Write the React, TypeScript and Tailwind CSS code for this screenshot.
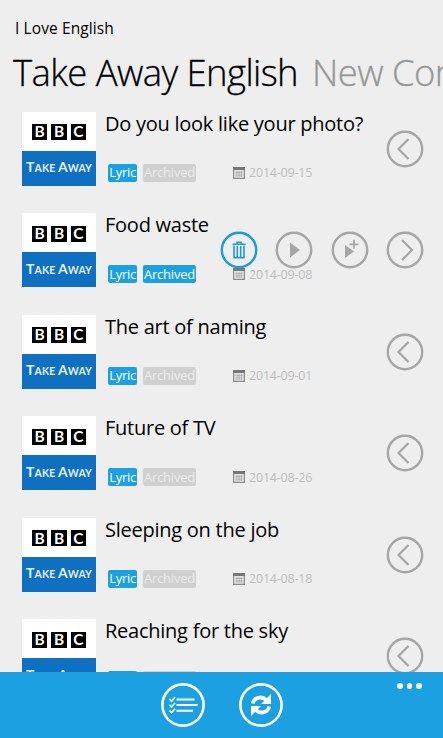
import type { ReactNode } from "react";
import clsx from "clsx";

type Episode = {
  title: string;
  date: string;
  archived?: boolean;
  expanded?: boolean;
};

const episodes: Episode[] = [
  { title: "Do you look like your photo?", date: "2014-09-15" },
  { title: "Food waste", date: "2014-09-08", archived: true, expanded: true },
  { title: "The art of naming", date: "2014-09-01" },
  { title: "Future of TV", date: "2014-08-26" },
  { title: "Sleeping on the job", date: "2014-08-18" },
  { title: "Reaching for the sky", date: "2014-08-11" },
];

function RoundIcon({ className, children }: { className?: string; children: ReactNode }) {
  return (
    <svg
      viewBox="0 0 38 38"
      className={clsx("size-[38px] shrink-0", className ?? "text-[#a6a6a6]")}
      fill="none"
      stroke="currentColor"
    >
      <circle cx="19" cy="19" r="17.2" strokeWidth="2.4" />
      {children}
    </svg>
  );
}

function Thumbnail() {
  return (
    <div className="flex h-[74px] w-[74px] shrink-0 flex-col bg-white">
      <div className="flex h-[39px] items-end justify-center gap-[4px] pb-[10.5px]">
        {["B", "B", "C"].map((letter, i) => (
          <span
            key={i}
            className="flex h-[16px] w-[15.5px] items-center justify-center bg-black font-['Lato'] text-[15.5px] leading-none font-bold text-white"
          >
            {letter}
          </span>
        ))}
      </div>
      <div className="flex h-[35px] items-center justify-center bg-[#0f6fc0] pb-[2px] font-['Lato'] text-[10.5px] leading-none font-bold tracking-[0.1px] whitespace-nowrap text-[#e4f0fa]">
        <span>
          <span className="text-[14px]">T</span>AKE <span className="text-[14px]">A</span>WAY
        </span>
      </div>
    </div>
  );
}

function CalendarIcon() {
  return (
    <svg viewBox="0 0 12 12" className="size-[12px]">
      <rect x="0.6" y="0.6" width="10.8" height="10.8" fill="#e2e2e2" stroke="#8c8c8c" strokeWidth="1.2" />
      <path d="M0 0h12v3H0z" fill="#777" />
      <path d="M4 4v6M6.2 4v6M8.4 4v6M2.5 5.5h7M2.5 8h7" stroke="#aaa" strokeWidth="0.8" />
    </svg>
  );
}

function Tag({ active, className, children }: { active?: boolean; className: string; children: ReactNode }) {
  return (
    <span
      className={clsx(
        "flex h-[18px] items-center justify-center rounded-[2px] text-[13px] leading-none whitespace-nowrap",
        active ? "bg-[#1ba1e2] text-white" : "bg-[#d0d0d0] text-[#ebebeb]",
        className,
      )}
    >
      {children}
    </span>
  );
}

function EpisodeRow({ title, date, archived, expanded }: Episode) {
  return (
    <li className="relative flex h-[101.6px] shrink-0 pl-[22px]">
      <Thumbnail />
      <div className="pl-[9px]">
        <h2 className="h-[52px] text-[20px] leading-[24px] tracking-[-0.25px] whitespace-nowrap text-black">{title}</h2>
        <div className="flex items-center pl-[3px]">
          <Tag active className="w-[29px] tracking-[-0.3px]">
            Lyric
          </Tag>
          <Tag active={archived} className="ml-[6px] w-[53px] tracking-[-0.2px]">
            Archived
          </Tag>
          <div className="ml-[37px] flex items-center gap-[4px] text-[12.5px] leading-none tracking-[-0.2px] text-[#bdbdbd]">
            <CalendarIcon />
            <span className="pt-[1.5px]">{date}</span>
          </div>
        </div>
      </div>
      <div className="absolute top-[18px] right-[19px] flex gap-[17.5px]">
        {expanded ? (
          <>
            <RoundIcon className="text-[#1b9bd8]">
              <path d="M12.5 13.2h13M17 12.8v-1.6h4v1.6" strokeWidth="1.4" />
              <path d="M14 14.5v12.3h10V14.5M17.3 15v11M20.7 15v11" strokeWidth="1.6" />
            </RoundIcon>
            <RoundIcon>
              <path d="M15 11.5v15l10-7.5z" fill="currentColor" stroke="none" />
            </RoundIcon>
            <RoundIcon>
              <path d="M14 14v13l9-6.5z" fill="currentColor" stroke="none" />
              <path d="M23 8.8v9M18.5 13.3h9" strokeWidth="1.8" />
            </RoundIcon>
            <RoundIcon>
              <path d="M16 9l10 10-10 10" strokeWidth="2.2" />
            </RoundIcon>
          </>
        ) : (
          <RoundIcon>
            <path d="M22.5 9l-10 10 10 10" strokeWidth="2.2" />
          </RoundIcon>
        )}
      </div>
    </li>
  );
}

function AppBar() {
  return (
    <footer className="relative flex h-[66px] shrink-0 items-center justify-center gap-[34px] bg-[#1ba1e2] text-white">
      <svg viewBox="0 0 44 44" className="size-[44px]" fill="none" stroke="currentColor">
        <circle cx="22" cy="22" r="20.6" strokeWidth="2.6" />
        <path d="M15.5 16.5h18M15.5 22h21M15.5 27.7h16.5" strokeWidth="1.9" />
        <path d="M8.5 16l2 2.2 3.5-4M8.5 21.8l2 2.2 3.5-4M8.5 27.5l2 2.2 3.5-4" strokeWidth="1.6" />
      </svg>
      <svg viewBox="0 0 44 44" className="size-[44px]" fill="none" stroke="currentColor">
        <circle cx="22" cy="22" r="20.6" strokeWidth="2.6" />
        <path d="M13.8 20.5c1-6 9-8 13.5-3.5M30.2 23.5c-1 6-9 8-13.5 3.5" strokeWidth="3.8" />
        <path d="M32 11v10H22l3.5-3.5 3.5-3.5zM12 33V23h10l-3.5 3.5-3.5 3.5z" fill="currentColor" stroke="none" />
      </svg>
      <div className="absolute top-[11px] right-[21.5px] flex gap-[4px]">
        <i className="size-[5.5px] rounded-full bg-white" />
        <i className="size-[5.5px] rounded-full bg-white" />
        <i className="size-[5.5px] rounded-full bg-white" />
      </div>
    </footer>
  );
}

export default function App() {
  return (
    <div className="flex h-[738px] w-[443px] flex-col overflow-hidden bg-[#eeeeee] font-['Open_Sans','Noto_Sans',sans-serif]">
      <main className="flex min-h-0 flex-1 flex-col overflow-hidden">
        <div className="h-[48px] shrink-0 pt-[17.5px] pl-[15px] text-[15.5px] leading-[20px] tracking-[0.1px] text-black">
          I Love English
        </div>
        <div className="flex h-[63.5px] shrink-0 gap-[14px] pl-[13px] text-[36.5px] leading-[48px] font-light tracking-[-0.6px] whitespace-nowrap [-webkit-text-stroke:0.3px]">
          <h1 className="text-black">Take Away English</h1>
          <span className="text-[#969696]">New Comments</span>
        </div>
        <ul className="flex flex-col">
          {episodes.map((episode) => (
            <EpisodeRow key={episode.date} {...episode} />
          ))}
        </ul>
      </main>
      <AppBar />
    </div>
  );
}
